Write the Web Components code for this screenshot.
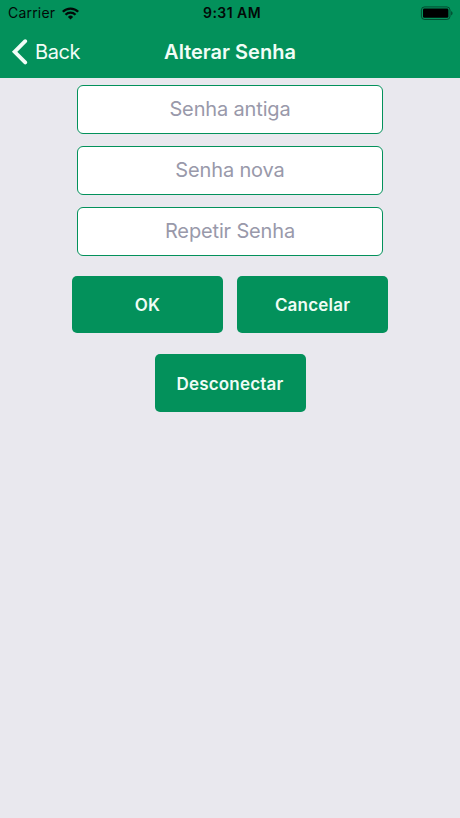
<!DOCTYPE html>
<html lang="pt-BR">
<head>
<meta charset="utf-8">
<meta name="viewport" content="width=device-width, initial-scale=1">
<title>Alterar Senha</title>
<style>
  body {
    margin: 0;
    background: #e9e8ee;
    font-family: Inter, "Liberation Sans", sans-serif;
    --brand: #03915b;
  }
</style>
</head>
<body>
<password-screen></password-screen>

<script>
class StatusBar extends HTMLElement {
    constructor() {
        super();
        this.attachShadow({ mode: 'open' });
        this.shadowRoot.innerHTML = `
            <style>
                :host {
                    display: grid;
                    grid-template-columns: 1fr auto 1fr;
                    align-items: center;
                    height: 26px;
                    padding: 0 7px 0 8px;
                    color: #020a07;
                    font-size: 14px;
                    line-height: 26px;
                }
                .carrier {
                    display: flex;
                    align-items: center;
                    gap: 7px;
                    letter-spacing: 0.2px;
                }
                .time {
                    font-weight: 600;
                    letter-spacing: 0.45px;
                    padding-left: 3px;
                }
                .battery {
                    justify-self: end;
                }
                svg {
                    display: block;
                }
            </style>
            <div class="carrier">
                <span>Carrier</span>
                <svg width="17" height="13" viewBox="0 0 17 13" fill="none" stroke="#020a07" stroke-width="2.3">
                    <path d="M0.8 4.8a10.9 10.9 0 0 1 15.4 0"/>
                    <path d="M3.5 7.7a7.1 7.1 0 0 1 10 0"/>
                    <path d="M8.5 12.5L5.9 9.9a3.7 3.7 0 0 1 5.2 0z" fill="#020a07" stroke="none"/>
                </svg>
            </div>
            <div class="time"><slot></slot></div>
            <svg class="battery" width="33" height="14" viewBox="0 0 33 14">
                <rect x="1.4" y="0.9" width="28.6" height="12.6" rx="3.2" fill="none" stroke="#020a07" stroke-opacity="0.5"/>
                <rect x="3" y="2.6" width="25.4" height="9.2" rx="1.4" fill="#000"/>
                <path d="M31.2 5v4.4c1.8-0.8 1.8-3.6 0-4.4z" fill="#020a07" fill-opacity="0.55"/>
            </svg>
        `;
    }
}

class NavBar extends HTMLElement {
    constructor() {
        super();
        this.attachShadow({ mode: 'open' });
        this.shadowRoot.innerHTML = `
            <style>
                :host {
                    display: grid;
                    grid-template-columns: 1fr auto 1fr;
                    align-items: center;
                    height: 52px;
                    padding: 0 11px;
                    color: #f1fdf7;
                    font-size: 20px;
                }
                .back {
                    display: flex;
                    align-items: center;
                    gap: 7px;
                    padding: 0;
                    border: 0;
                    background: none;
                    color: inherit;
                    font: inherit;
                    letter-spacing: -0.4px;
                }
                .title {
                    font-weight: 600;
                }
            </style>
            <button class="back">
                <svg width="17" height="26" viewBox="0 0 17 26" fill="none" stroke="currentColor" stroke-width="3.8" stroke-linecap="round" stroke-linejoin="miter">
                    <path d="M14.2 2.2L3.6 12.8l10.6 10.6"/>
                </svg>
                <span>Back</span>
            </button>
            <div class="title"><slot></slot></div>
        `;
    }
}

class PasswordField extends HTMLElement {
    constructor() {
        super();
        this.attachShadow({ mode: 'open' });
        this.shadowRoot.innerHTML = `
            <style>
                :host {
                    display: block;
                    width: 306px;
                    height: 49px;
                }
                input {
                    display: block;
                    box-sizing: border-box;
                    width: 100%;
                    height: 100%;
                    margin: 0;
                    padding: 0 0 1px;
                    border: 1px solid var(--brand);
                    border-radius: 6px;
                    background: #fff;
                    font: inherit;
                    font-size: 20px;
                    letter-spacing: -0.15px;
                    text-align: center;
                    outline: none;
                }
                input::placeholder {
                    color: #9999aa;
                    opacity: 1;
                }
            </style>
            <input type="password">
        `;
        this.shadowRoot.querySelector('input').placeholder = this.getAttribute('label');
    }
}

class ActionButton extends HTMLElement {
    constructor() {
        super();
        this.attachShadow({ mode: 'open' });
        this.shadowRoot.innerHTML = `
            <style>
                :host {
                    display: block;
                    width: 151px;
                    height: 57.5px;
                }
                button {
                    display: block;
                    width: 100%;
                    height: 100%;
                    padding: 1px 0 0;
                    border: 0;
                    border-radius: 5px;
                    background: var(--brand);
                    color: #effcf5;
                    font: inherit;
                    font-size: 17px;
                    font-weight: 600;
                    letter-spacing: 0.2px;
                }
            </style>
            <button><slot></slot></button>
        `;
    }
}

class PasswordScreen extends HTMLElement {
    constructor() {
        super();
        this.attachShadow({ mode: 'open' });
        this.shadowRoot.innerHTML = `
            <style>
                :host {
                    display: block;
                    min-height: 100vh;
                }
                header {
                    background: var(--brand);
                }
                form {
                    display: flex;
                    flex-direction: column;
                    align-items: center;
                    padding-top: 7px;
                }
                .fields {
                    display: grid;
                    gap: 12.2px;
                }
                .actions {
                    display: flex;
                    gap: 14px;
                    margin: 19.6px 0 21px;
                }
            </style>
            <header>
                <status-bar>9:31 AM</status-bar>
                <nav-bar>Alterar Senha</nav-bar>
            </header>
            <form>
                <div class="fields">
                    <password-field label="Senha antiga"></password-field>
                    <password-field label="Senha nova"></password-field>
                    <password-field label="Repetir Senha"></password-field>
                </div>
                <div class="actions">
                    <action-button>OK</action-button>
                    <action-button>Cancelar</action-button>
                </div>
                <action-button>Desconectar</action-button>
            </form>
        `;
    }
}

customElements.define('status-bar', StatusBar);
customElements.define('nav-bar', NavBar);
customElements.define('password-field', PasswordField);
customElements.define('action-button', ActionButton);
customElements.define('password-screen', PasswordScreen);
</script>
</body>
</html>
